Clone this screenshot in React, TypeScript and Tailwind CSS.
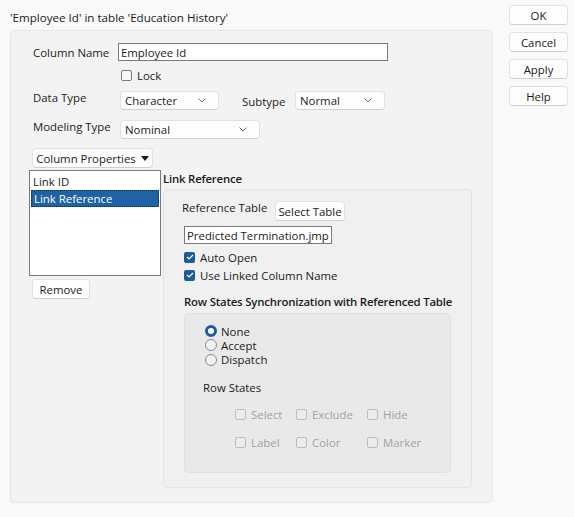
import React from "react";

const font = { fontFamily: '"Open Sans", "Noto Sans", sans-serif' };

function Chevron() {
  return (
    <svg width="8" height="5" viewBox="0 0 8 5" className="shrink-0">
      <path d="M0.5 0.5 L4 4 L7.5 0.5" fill="none" stroke="#707070" strokeWidth="1" />
    </svg>
  );
}

function Select({ value, width }: { value: string; width: string }) {
  return (
    <div
      className={`${width} h-[19px] bg-[#fdfdfd] border border-[#e2e2e2] border-b-[#d0d0d0] rounded-[4px] flex items-center justify-between pl-[4px] pr-[12px]`}
    >
      <span>{value}</span>
      <Chevron />
    </div>
  );
}

function Button({ children, className = "" }: { children: React.ReactNode; className?: string }) {
  return (
    <div
      className={`h-[20px] bg-[#fdfdfd] border border-[#e2e2e2] border-b-[#cfcfcf] rounded-[4px] flex items-center justify-center whitespace-nowrap ${className}`}
    >
      {children}
    </div>
  );
}

function Check({ checked = false, disabled = false }: { checked?: boolean; disabled?: boolean }) {
  if (checked) {
    return (
      <div className="w-[11px] h-[11px] rounded-[2px] bg-[#1c5c9e] flex items-center justify-center shrink-0">
        <svg width="8" height="6" viewBox="0 0 8 6">
          <path d="M1 3 L3 5 L7 1" fill="none" stroke="#ffffff" strokeWidth="1.2" />
        </svg>
      </div>
    );
  }
  return (
    <div
      className={`w-[11px] h-[11px] rounded-[2px] border shrink-0 ${
        disabled ? "border-[#bdbdbd] bg-[#ececec]" : "border-[#7a7a7a] bg-[#f7f7f7]"
      }`}
    />
  );
}

function Radio({ selected = false }: { selected?: boolean }) {
  return selected ? (
    <div className="w-[12px] h-[12px] rounded-full border-[3px] border-[#1c5c9e] bg-white shrink-0" />
  ) : (
    <div className="w-[12px] h-[12px] rounded-full border border-[#8a8a8a] bg-[#f2f2f2] shrink-0" />
  );
}

function DisabledCheck({ label, width }: { label: string; width: string }) {
  return (
    <div className={`${width} flex items-center gap-[5px] text-[#a2a2a2]`}>
      <Check disabled />
      <span>{label}</span>
    </div>
  );
}

export default function App() {
  return (
    <div
      className="w-[574px] h-[517px] bg-[#f9f9f9] flex text-[11.4px] leading-[15px] text-[#1b1b1b] overflow-hidden whitespace-nowrap"
      style={font}
    >
      {/* left: title + panel */}
      <div className="ml-[10px] w-[483px] flex flex-col">
        <div className="h-[30px] pt-[10px] text-[11.6px]">'Employee Id' in table 'Education History'</div>
        <div className="h-[473px] bg-[#f3f3f3] border border-[#e6e6e6] rounded-[4px] pt-[12px] pl-[19px] flex flex-col">
          {/* Column Name */}
          <div className="flex items-center h-[18px]">
            <span className="ml-[3px] w-[85px]">Column Name</span>
            <div className="w-[270px] h-[18px] bg-white border border-[#7a7a7a] flex items-center pl-[2px]">
              Employee Id
            </div>
          </div>
          {/* Lock */}
          <div className="flex items-center gap-[5px] ml-[91px] mt-[8px] h-[12px]">
            <Check />
            <span>Lock</span>
          </div>
          {/* Data Type */}
          <div className="flex items-start mt-[10px] h-[19px]">
            <span className="ml-[3px] w-[87px] -mt-[1px]">Data Type</span>
            <Select value="Character" width="w-[99px]" />
            <span className="ml-[23px] w-[53px] mt-[3px]">Subtype</span>
            <Select value="Normal" width="w-[90px]" />
          </div>
          {/* Modeling Type */}
          <div className="flex items-start mt-[10px] h-[19px]">
            <span className="ml-[3px] w-[87px] -mt-[1px]">Modeling Type</span>
            <Select value="Nominal" width="w-[140px]" />
          </div>
          {/* Column Properties */}
          <Button className="ml-[2px] mt-[9px] w-[121px] h-[19px] gap-[5px]">
            <span>Column Properties</span>
            <svg width="8" height="5" viewBox="0 0 8 5">
              <path d="M0 0 L8 0 L4 5 Z" fill="#1b1b1b" />
            </svg>
          </Button>
          {/* list + link reference */}
          <div className="flex mt-[2px] -ml-[1px]">
            <div className="flex flex-col">
              <div className="w-[132px] h-[106px] bg-white border border-[#7a7a7a] pt-[1px] px-[1px] flex flex-col">
                <div className="h-[18px] flex items-center pl-[2px]">Link ID</div>
                <div className="h-[17px] flex items-center pl-[2px] bg-[#1e63a5] text-white border border-dotted border-[#0b2a4a]">
                  Link Reference
                </div>
              </div>
              <Button className="ml-[3px] mt-[3px] w-[58px] h-[19px]">Remove</Button>
            </div>
            <div className="ml-[2px] flex flex-col">
              <div className="h-[19px] pt-[1px] font-semibold tracking-[-0.2px]">Link Reference</div>
              <div className="w-[309px] h-[299px] bg-[#f0f0f0] border border-[#e4e4e4] rounded-[4px] pt-[10px] pl-[18px] flex flex-col">
                {/* Reference table */}
                <div className="flex items-start h-[21px]">
                  <span className="w-[93px]">Reference Table</span>
                  <Button className="w-[70px] mt-[1px]">Select Table</Button>
                </div>
                <div className="mt-[5px] ml-[2px] w-[148px] h-[18px] bg-white border border-[#7a7a7a] flex items-center pl-[2px]">
                  Predicted Termination.jmp
                </div>
                <div className="flex items-center gap-[5px] ml-[2px] mt-[7px] h-[12px]">
                  <Check checked />
                  <span>Auto Open</span>
                </div>
                <div className="flex items-center gap-[5px] ml-[2px] mt-[6px] h-[12px]">
                  <Check checked />
                  <span>Use Linked Column Name</span>
                </div>
                <div className="ml-[2px] mt-[13px] h-[15px] font-semibold tracking-[-0.2px]">
                  Row States Synchronization with Referenced Table
                </div>
                {/* inner group */}
                <div className="ml-[2px] mt-[4px] w-[267px] h-[160px] bg-[#e9e9e9] border border-[#e1e1e1] rounded-[4px] pt-[10px] pl-[20px] flex flex-col">
                  <div className="flex items-center gap-[4px] h-[14px]">
                    <Radio selected />
                    <span>None</span>
                  </div>
                  <div className="flex items-center gap-[4px] h-[14px]">
                    <Radio />
                    <span>Accept</span>
                  </div>
                  <div className="flex items-center gap-[4px] h-[15px]">
                    <Radio />
                    <span>Dispatch</span>
                  </div>
                  <div className="mt-[13px] -ml-[2px] h-[15px]">Row States</div>
                  <div className="ml-[30px] mt-[12px] flex h-[14px]">
                    <DisabledCheck label="Select" width="w-[61px]" />
                    <DisabledCheck label="Exclude" width="w-[71px]" />
                    <DisabledCheck label="Hide" width="w-[60px]" />
                  </div>
                  <div className="ml-[30px] mt-[14px] flex h-[14px]">
                    <DisabledCheck label="Label" width="w-[61px]" />
                    <DisabledCheck label="Color" width="w-[71px]" />
                    <DisabledCheck label="Marker" width="w-[60px]" />
                  </div>
                </div>
              </div>
            </div>
          </div>
        </div>
      </div>
      {/* right: buttons */}
      <div className="ml-[16px] pt-[5px] flex flex-col gap-[7px]">
        <Button className="w-[59px]">OK</Button>
        <Button className="w-[59px]">Cancel</Button>
        <Button className="w-[59px]">Apply</Button>
        <Button className="w-[59px]">Help</Button>
      </div>
    </div>
  );
}
